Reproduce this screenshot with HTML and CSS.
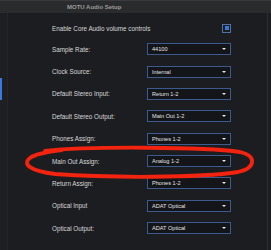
FILE: index.html
```html
<!DOCTYPE html>
<html>
<head>
  <meta charset="UTF-8">
  <title>MOTU Audio Setup</title>
  <link rel="stylesheet" href="styles.css">
</head>
<body>
  <div id="window">
    <div class="titlebar">MOTU Audio Setup</div>
    <div class="main">
      <div class="sidebar"><div class="tab-mark"></div></div>
      <div class="settings">
        <div class="row row-check">
          <span class="label">Enable Core Audio volume controls</span>
          <span class="checkbox"></span>
        </div>
        <div class="row">
          <span class="label">Sample Rate:</span>
          <div class="select"><span>44100</span><i class="arrow"></i></div>
        </div>
        <div class="row">
          <span class="label">Clock Source:</span>
          <div class="select"><span>Internal</span><i class="arrow"></i></div>
        </div>
        <div class="row">
          <span class="label">Default Stereo Input:</span>
          <div class="select"><span>Return 1-2</span><i class="arrow"></i></div>
        </div>
        <div class="row">
          <span class="label">Default Stereo Output:</span>
          <div class="select"><span>Main Out 1-2</span><i class="arrow"></i></div>
        </div>
        <div class="row">
          <span class="label">Phones Assign:</span>
          <div class="select"><span>Phones 1-2</span><i class="arrow"></i></div>
        </div>
        <div class="row">
          <span class="label">Main Out Assign:</span>
          <div class="select"><span>Analog 1-2</span><i class="arrow"></i></div>
        </div>
        <div class="row">
          <span class="label">Return Assign:</span>
          <div class="select"><span>Phones 1-2</span><i class="arrow"></i></div>
        </div>
        <div class="row">
          <span class="label">Optical Input</span>
          <div class="select"><span>ADAT Optical</span><i class="arrow"></i></div>
        </div>
        <div class="row">
          <span class="label">Optical Output:</span>
          <div class="select"><span>ADAT Optical</span><i class="arrow"></i></div>
        </div>
      </div>
    </div>
    <!-- hand drawn marker circle -->
    <svg class="scribble" width="271" height="250" viewBox="0 0 271 250">
      <path d="M45 151 C90 146, 205 147, 240 152 C257 156, 256 168, 238 172 C200 178, 110 178, 55 174 C30 171, 22 164, 30 158 C35 154, 45 152, 62 150"
            fill="none" stroke="#f2230f" stroke-width="3.8" stroke-linecap="round" stroke-linejoin="round"/>
    </svg>
  </div>
</body>
</html>
```

FILE: styles.css
```css
body {
  margin: 0;
  background: #1a1c1e;
  font-family: "Liberation Sans", Arial, sans-serif;
}
#window {
  position: relative;
  width: 271px;
  height: 250px;
  overflow: hidden;
  background: #1b1d20;
}
.titlebar {
  height: 12px;
  border-top: 1px solid #3a3b3d;
  background: #2a2b2d;
  color: #9c9c9c;
  font-size: 6px;
  font-weight: bold;
  line-height: 12px;
  padding-left: 67px;
}
.main {
  display: flex;
  height: 237px;
  border-right: 1px solid #2c2e31;
  width: 267px;
}
.sidebar {
  width: 7px;
  background: #1d1f22;
  border-right: 1px solid #232528;
  padding-top: 65px;
}
.tab-mark {
  width: 2px;
  height: 22px;
  background: #3a79dc;
}
.settings {
  padding: 5px 0 0 44px;
}
.row {
  display: grid;
  grid-template-columns: 95px 84px;
  align-items: center;
  height: 22.375px;
}
.row-check {
  height: 20px;
}
.label {
  color: #d9d9d9;
  font-size: 6.3px;
  white-space: nowrap;
}
.checkbox {
  justify-self: end;
  width: 4px;
  height: 4px;
  padding: 1.5px;
  border: 1px solid #4f72aa;
  background: #3a77d6;
  background-clip: content-box;
}
.select {
  display: flex;
  align-items: center;
  justify-content: space-between;
  box-sizing: border-box;
  height: 12px;
  padding: 0 4px 0 4px;
  border: 1px solid #3b5a8e;
  background: #131518;
  color: #e4e4e4;
  font-size: 5.6px;
}
.arrow {
  width: 0;
  height: 0;
  border-left: 2px solid transparent;
  border-right: 2px solid transparent;
  border-top: 2.5px solid #e8e8e8;
}
.scribble {
  position: absolute;
  top: 0;
  left: 0;
}
```
